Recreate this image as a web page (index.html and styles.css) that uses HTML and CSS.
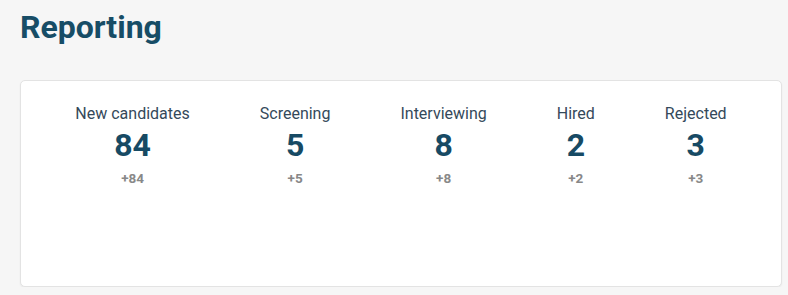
FILE: index.html
```html
<!DOCTYPE html>
<html lang="en">
<head>
<meta charset="utf-8">
<title>Reporting</title>
<link rel="stylesheet" href="styles.css">
</head>
<body>
<h1 class="page-title">Reporting</h1>
<section class="card">
  <div class="stats">
    <div class="stat">
      <div class="stat-label">New candidates</div>
      <div class="stat-value">84</div>
      <div class="stat-delta">+84</div>
    </div>
    <div class="stat">
      <div class="stat-label">Screening</div>
      <div class="stat-value">5</div>
      <div class="stat-delta">+5</div>
    </div>
    <div class="stat">
      <div class="stat-label">Interviewing</div>
      <div class="stat-value">8</div>
      <div class="stat-delta">+8</div>
    </div>
    <div class="stat">
      <div class="stat-label">Hired</div>
      <div class="stat-value">2</div>
      <div class="stat-delta">+2</div>
    </div>
    <div class="stat">
      <div class="stat-label">Rejected</div>
      <div class="stat-value">3</div>
      <div class="stat-delta">+3</div>
    </div>
  </div>
</section>
</body>
</html>
```

FILE: styles.css
```css
html, body {
  margin: 0;
  background: #f6f6f6;
}
body {
  padding: 0 6px 0 20px;
  font-family: Roboto, "Noto Sans", sans-serif;
}
.page-title {
  margin: 0;
  padding-top: 8px;
  font-size: 32px;
  line-height: 38px;
  font-weight: 700;
  color: #174d66;
}
.card {
  box-sizing: border-box;
  margin-top: 34px;
  height: 207px;
  background: #fff;
  border: 1px solid #e3e3e3;
  border-radius: 5px;
  box-shadow: 0 1px 2px rgba(0,0,0,0.06);
  padding-top: 23px;
}
.stats {
  display: flex;
  justify-content: center;
  gap: 70px;
}
.stat {
  display: flex;
  flex-direction: column;
  align-items: center;
}
.stat-label {
  font-size: 16px;
  line-height: 19px;
  color: #34495a;
}
.stat-value {
  margin-top: 3px;
  font-size: 32px;
  line-height: 38px;
  font-weight: 700;
  color: #174a64;
}
.stat-delta {
  margin-top: 6px;
  font-size: 13.5px;
  line-height: 16px;
  font-weight: 700;
  color: #888888;
}
```
